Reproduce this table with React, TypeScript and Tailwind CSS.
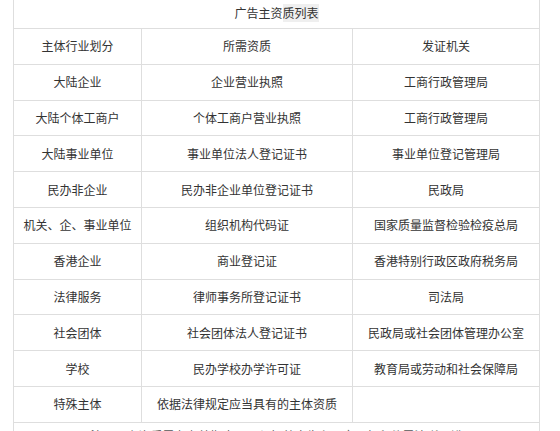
import React from "react";

const rows: [string, string, string][] = [
  ["主体行业划分", "所需资质", "发证机关"],
  ["大陆企业", "企业营业执照", "工商行政管理局"],
  ["大陆个体工商户", "个体工商户营业执照", "工商行政管理局"],
  ["大陆事业单位", "事业单位法人登记证书", "事业单位登记管理局"],
  ["民办非企业", "民办非企业单位登记证书", "民政局"],
  ["机关、企、事业单位", "组织机构代码证", "国家质量监督检验检疫总局"],
  ["香港企业", "商业登记证", "香港特别行政区政府税务局"],
  ["法律服务", "律师事务所登记证书", "司法局"],
  ["社会团体", "社会团体法人登记证书", "民政局或社会团体管理办公室"],
  ["学校", "民办学校办学许可证", "教育局或劳动和社会保障局"],
  ["特殊主体", "依据法律规定应当具有的主体资质", ""],
];

export default function App() {
  return (
    <div className="w-[560px] h-[431px] overflow-hidden bg-white text-[12px] text-[#333] font-['Noto_Sans_CJK_SC','Noto_Sans',sans-serif]">
      <div className="ml-[13px] w-[526px] grid grid-cols-[128px_211px_187px] border-l border-[#dedede]">
        <div className="col-span-3 h-[29px] flex items-center justify-center border-r border-b border-[#dedede] pb-[2px]">
          <span>广告主资</span>
          <span className="bg-[#efefef]">质列表</span>
        </div>
        {rows.map((r, i) => (
          <React.Fragment key={i}>
            {r.map((c, j) => (
              <div
                key={j}
                className="h-[35.8px] flex items-center justify-center border-r border-b border-[#dedede] leading-none"
              >
                {c}
              </div>
            ))}
          </React.Fragment>
        ))}
        <div className="col-span-3 h-[40px] border-r border-[#dedede] pt-[4px] text-center text-[#555]">
          注：以上资质需在有效期内，且须加盖广告主公章，复印件需清晰可辨
        </div>
      </div>
    </div>
  );
}
